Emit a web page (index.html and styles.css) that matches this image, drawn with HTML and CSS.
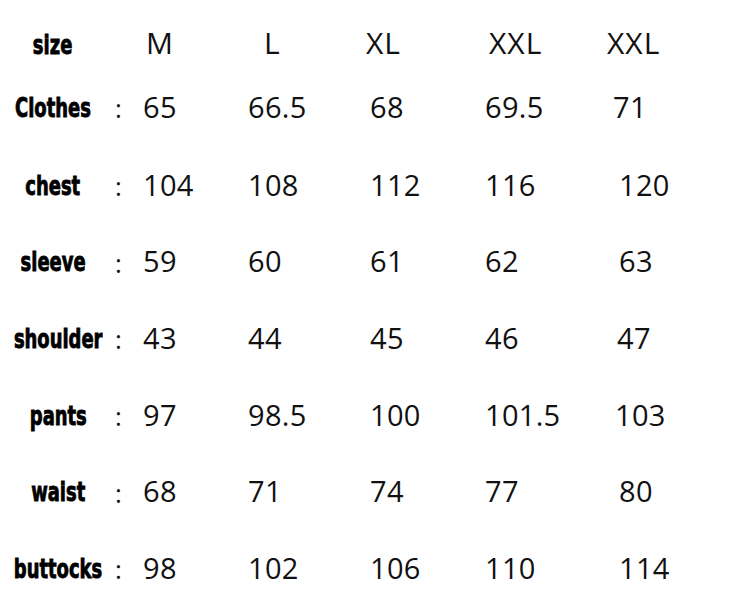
FILE: index.html
```html
<!DOCTYPE html>
<html>
<head>
<meta charset="utf-8">
<link rel="stylesheet" href="styles.css">
</head>
<body>
<div class="chart">
  <div class="row head">
    <div class="label"><span>size</span></div>
    <div class="colon"></div>
    <div class="cell h1">M</div>
    <div class="cell h2">L</div>
    <div class="cell h3">XL</div>
    <div class="cell h4">XXL</div>
    <div class="cell h5">XXL</div>
  </div>
  <div class="row first">
    <div class="label"><span>Clothes</span></div>
    <div class="colon">:</div>
    <div class="cell">65</div>
    <div class="cell">66.5</div>
    <div class="cell">68</div>
    <div class="cell">69.5</div>
    <div class="cell s7">71</div>
  </div>
  <div class="row">
    <div class="label"><span>chest</span></div>
    <div class="colon">:</div>
    <div class="cell">104</div>
    <div class="cell">108</div>
    <div class="cell">112</div>
    <div class="cell">116</div>
    <div class="cell">120</div>
  </div>
  <div class="row">
    <div class="label"><span>sleeve</span></div>
    <div class="colon">:</div>
    <div class="cell">59</div>
    <div class="cell">60</div>
    <div class="cell">61</div>
    <div class="cell">62</div>
    <div class="cell">63</div>
  </div>
  <div class="row">
    <div class="label shift"><span>shoulder</span></div>
    <div class="colon">:</div>
    <div class="cell">43</div>
    <div class="cell">44</div>
    <div class="cell">45</div>
    <div class="cell">46</div>
    <div class="cell s2">47</div>
  </div>
  <div class="row">
    <div class="label shift"><span>pants</span></div>
    <div class="colon">:</div>
    <div class="cell">97</div>
    <div class="cell">98.5</div>
    <div class="cell">100</div>
    <div class="cell">101.5</div>
    <div class="cell s4">103</div>
  </div>
  <div class="row">
    <div class="label shift"><span>waist</span></div>
    <div class="colon">:</div>
    <div class="cell">68</div>
    <div class="cell">71</div>
    <div class="cell">74</div>
    <div class="cell">77</div>
    <div class="cell">80</div>
  </div>
  <div class="row">
    <div class="label shift"><span>buttocks</span></div>
    <div class="colon">:</div>
    <div class="cell">98</div>
    <div class="cell">102</div>
    <div class="cell">106</div>
    <div class="cell">110</div>
    <div class="cell">114</div>
  </div>
</div>
</body>
</html>
```
FILE: styles.css
```css
html, body {
  margin: 0;
  padding: 0;
  background: #ffffff;
}
.chart {
  width: 750px;
  height: 600px;
  padding-top: 20px;
  box-sizing: border-box;
  color: #111;
  font-family: "Open Sans", "Noto Sans", sans-serif;
}
.row {
  display: grid;
  grid-template-columns: 112px 31px 105px 122px 115px 133px 1fr;
  align-items: center;
  height: 76.6px;
}
.row.head {
  height: 46px;
}
.row.first {
  height: 80px;
}
.label {
  text-align: center;
  font-family: "DejaVu Sans", sans-serif;
  font-weight: bold;
  font-size: 26px;
  line-height: 1;
  color: #000;
  -webkit-text-stroke: 0.9px #000;
  white-space: nowrap;
  padding-top: 3px;
  padding-right: 6px;
}
.label.shift {
  padding-right: 0;
  padding-left: 4px;
}
.label span {
  display: inline-block;
  transform: scaleX(0.69);
  margin: 0 -30px;
}
.colon {
  font-size: 26px;
  font-weight: 400;
  padding-left: 3px;
  padding-top: 4px;
}
.cell {
  font-size: 29px;
  font-weight: 400;
  line-height: 1;
  letter-spacing: 0.3px;
}
.head .cell {
  font-size: 30px;
  letter-spacing: 1px;
}
.cell.h1 { padding-left: 3px; }
.cell.h2 { padding-left: 16px; }
.cell.h3 { margin-left: -4px; }
.cell.h4 { padding-left: 4px; }
.cell.h5 { margin-left: -12px; }
.row .cell:last-child { padding-left: 1px; }
.row .cell.s7 { margin-left: -6px; }
.row .cell.s4 { margin-left: -4px; }
.row .cell.s2 { margin-left: -2px; }
```
